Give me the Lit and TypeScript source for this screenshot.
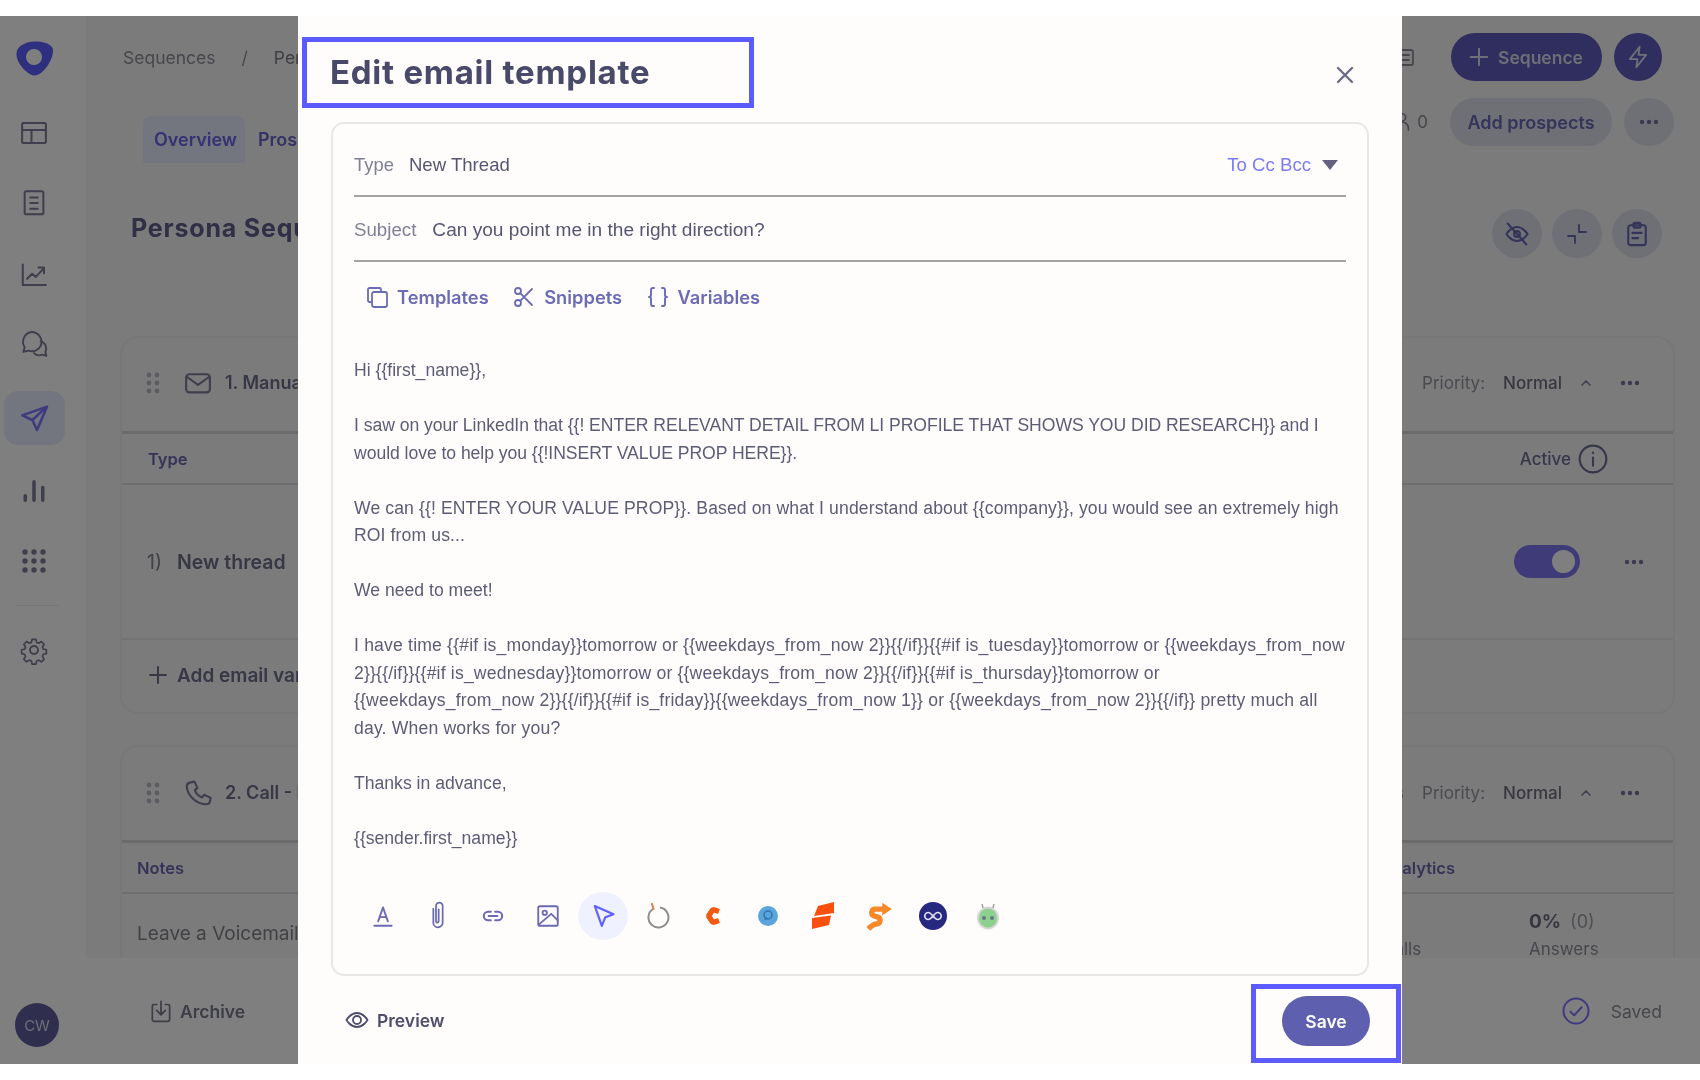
import { LitElement, html, css, svg } from "lit";
import { customElement } from "lit/decorators.js";

const ic = (size: number, body: unknown, sw = 2, cls = "") => html`<svg class=${cls} width=${size} height=${size} viewBox="0 0 24 24" fill="none" stroke="currentColor" stroke-width=${sw} stroke-linecap="round" stroke-linejoin="round">${body}</svg>`;
const dots = html`<svg class="dots" width="20" height="6" viewBox="0 0 20 6" fill="currentColor"><circle cx="3" cy="3" r="2.2"/><circle cx="10" cy="3" r="2.2"/><circle cx="17" cy="3" r="2.2"/></svg>`;
const grip = html`<svg width="14" height="22" viewBox="0 0 14 22" fill="#b9b9c2"><circle cx="3" cy="3" r="2.4"/><circle cx="11" cy="3" r="2.4"/><circle cx="3" cy="11" r="2.4"/><circle cx="11" cy="11" r="2.4"/><circle cx="3" cy="19" r="2.4"/><circle cx="11" cy="19" r="2.4"/></svg>`;
const chev = ic(16, svg`<path d="M6 15l6-6 6 6"/>`, 2.6);

@customElement("app-root")
export class AppRoot extends LitElement {
  static styles = css`
    :host { display: block; height: 1080px; padding: 16px 0; box-sizing: border-box; background: #fff; font-family: Inter, "Liberation Sans", sans-serif; color: #7e7ea0; }
    * { box-sizing: border-box; }
    .stage { position: relative; height: 1048px; overflow: hidden; }
    .app { display: flex; height: 1048px; filter: blur(0.7px); }
    .scrim { position: absolute; inset: 0; background: rgba(0,0,0,.5); }

    .side { width: 86px; flex: none; background: #fff; display: grid; grid-template-columns: 68px; grid-template-rows: 82px 70px 70px 74px 64px 84px 62px 15px 48px 40px 50px 1fr; justify-items: center; align-items: center; color: #7c7c98; }
    .logo { color: #5e5eff; display: flex; margin: 3px 0 0 1px; }
    .active { width: 61px; height: 54px; margin-left: 1px; border-radius: 14px; background: #e6ebfe; color: #7e74ff; display: flex; align-items: center; justify-content: center; }
    .sdiv { width: 43px; height: 1px; background: #ececf0; margin-left: 6px; }
    .avatar { align-self: end; width: 44px; height: 44px; margin: 0 0 17px 6px; border-radius: 50%; background: #5e5c9c; color: #dcdcea; font-size: 15px; display: flex; align-items: center; justify-content: center; }

    .main { flex: 1; min-width: 0; display: flex; flex-direction: column; background: #f7f7f8; }
    .top { height: 80px; flex: none; display: flex; align-items: center; padding: 2px 38px 0 37px; gap: 12px; }
    .crumbs { display: flex; gap: 26px; font-size: 17.5px; color: #8c8c98; flex: 1; }
    .crumbs b { font-weight: 400; color: #7c7c88; }
    .btn { height: 48px; border-radius: 24px; background: #5e5cbc; color: #dcdcee; font-size: 17.5px; font-weight: 600; display: flex; align-items: center; gap: 8px; padding: 0 16px 0 17px; width: 151px; }
    .round { width: 48px; height: 48px; border-radius: 50%; background: #5e5cbc; color: #e0e0f0; display: flex; align-items: center; justify-content: center; }
    .row2 { height: 67px; flex: none; display: flex; align-items: flex-start; padding: 0 26px 0 57px; }
    .tab { height: 47px; margin-top: 20px; padding: 13px 11px 0; font-size: 18px; font-weight: 600; border-radius: 8px 8px 0 0; color: #6a64e6; }
    .tab.on { background: #e6ebfe; width: 102px; }
    .tab.off { padding-left: 13px; color: #6866c8; }
    .spacer { flex: 1; }
    .count { display: flex; align-items: center; font-size: 17px; color: #8c8c98; height: 48px; }
    .count.c-doc { margin-right: 23px; }
    .count.c-pe { margin: 2px 22px 0 0; gap: 4px; }
    .pill { height: 48px; width: 162px; margin-top: 2px; border-radius: 24px; background: #dee1ec; color: #6866b4; font-size: 18px; font-weight: 600; display: flex; align-items: center; justify-content: center; }
    .circ { width: 50px; height: 48px; margin-top: 2px; border-radius: 50%; background: #dee1ec; color: #6866b4; display: flex; align-items: center; justify-content: center; margin-left: 12px; }
    .panel { flex: 1; min-height: 0; overflow: hidden; padding: 0 25px 0 34px; }
    .titlerow { height: 173px; padding: 46px 13px 0 11px; display: flex; align-items: flex-start; }
    h1 { margin: -6px 0 0; font-size: 25px; font-weight: 700; letter-spacing: .8px; color: #5e5e8a; line-height: 50px; flex: 1; }
    .titlerow .circ { margin: 0 0 0 10px; height: 49px; }
    .card { border: 2px solid #eeeef0; border-radius: 18px; margin-bottom: 31px; }
    .card.c1 { height: 378px; }
    .card.c2 { height: 300px; }
    .chead { height: 96px; display: flex; align-items: center; padding: 0 33px 4px 24px; font-size: 18px; font-weight: 600; color: #6e6e8c; border-bottom: 3px solid #d6d6da; }
    .c2 .chead { padding-bottom: 2px; }
    .chead .ci { margin: 0 12px 0 23px; color: #7c7c98; display: flex; }
    .prio { font-size: 17px; font-weight: 400; color: #9494a0; margin-right: 18px; }
    .norm { font-size: 17px; font-weight: 500; color: #6e6e80; margin-right: 16px; }
    .chev { color: #8484a0; margin-right: 26px; display: flex; }
    .dots { color: #7474a0; }
    .th { height: 51px; display: flex; align-items: center; font-size: 16.5px; font-weight: 600; color: #6a68ae; border-bottom: 2px solid #dcdce0; }
    .th.a { padding: 0 64px 0 26px; }
    .th.n { padding: 0 218px 0 15px; }
    .active-h { display: flex; align-items: center; gap: 6px; color: #6e6e96; font-weight: 500; font-size: 17px; }
    .rowa { height: 155px; display: flex; align-items: center; padding: 0 29px 0 25px; border-bottom: 2px solid #e8e8ea; font-size: 19.5px; font-weight: 600; color: #6e6e8c; }
    .rowa i { font-style: normal; font-weight: 400; margin-right: 15px; color: #84848c; }
    .tog { width: 66px; height: 33px; border-radius: 17px; background: #7e76f0; display: flex; align-items: center; justify-content: flex-end; padding-right: 5px; margin-right: 44px; }
    .tog span { width: 23px; height: 23px; border-radius: 50%; background: #fff; }
    .add { display: flex; align-items: center; gap: 7px; padding: 0 0 2px 24px; height: 72px; font-size: 19px; font-weight: 600; color: #6e6e8c; }
    .bodyr { display: flex; padding: 0 76px 0 15px; align-items: flex-start; }
    .voice { font-size: 19px; color: #84848c; margin-top: 28px; flex: 1; }
    .stat { margin-top: 12px; font-size: 17px; color: #8c8c9a; width: 68px; }
    .stat.calls { margin-right: 79px; }
    .stat b { display: block; height: 33px; line-height: 32px; font-size: 19px; color: #6e6e80; white-space: nowrap; }
    .stat b span { font-weight: 400; color: #a0a0a8; margin-left: 9px; font-size: 18px; }
    .foot { height: 106px; flex: none; background: #fff; display: flex; align-items: center; justify-content: space-between; padding: 0 38px 0 62px; font-size: 17.5px; }
    .arch { display: flex; align-items: center; gap: 6px; font-weight: 600; color: #7a7a90; }
    .saved { display: flex; align-items: center; gap: 20px; color: #8c8c98; }
    .saved svg { color: #7e74ff; }

    .modal { position: absolute; left: 298px; top: 0; width: 1104px; height: 1048px; background: #fffdfc; padding-top: 21px; display: flex; flex-direction: column; }
    .mhead { height: 71px; flex: none; margin: 0 0 14px 4px; display: flex; align-items: center; }
    .hbox { border: 5px solid #5b5bff; }
    .mtitle { width: 452px; height: 71px; padding-left: 23px; display: flex; align-items: center; }
    .mtitle span { font-size: 33px; font-weight: 650; letter-spacing: .75px; color: #49496a; filter: blur(.5px); margin-top: -1px; }
    .close { margin-left: auto; margin-right: 43px; margin-top: 4px; color: #6a6a88; display: flex; filter: blur(.3px); }
    .edit { height: 854px; flex: none; margin: 0 33px; border: 2px solid #e9e7e5; border-radius: 13px; padding: 0 21px; filter: blur(.5px); }
    .f { display: flex; align-items: center; font-family: "Liberation Sans", Arial, sans-serif; font-size: 18.6px; border-bottom: 2px solid #a3a3a3; color: #565672; }
    .f .l { color: #7f7f96; font-size: 18.4px; margin-right: 15px; }
    .f1 { height: 73px; padding-top: 11px; }
    .f2 { height: 65px; padding-top: 3px; font-size: 19.1px; }
    .f2 .l { font-size: 18.7px; margin-right: 16px; }
    .cc { margin-left: auto; color: #7b7bf5; margin-right: 11px; }
    .tri { width: 0; height: 0; border-left: 8px solid transparent; border-right: 8px solid transparent; border-top: 10px solid #62627e; margin-right: 8px; }
    .tools { height: 71px; display: flex; align-items: center; padding: 0 0 2px 11px; font-size: 18.3px; font-weight: 600; color: #6a6bb5; }
    .tool { display: flex; align-items: center; gap: 8px; margin-right: 23.5px; }
    .text { margin-top: 24px; height: 494px; font-family: "Liberation Sans", Arial, sans-serif; font-size: 17.6px; line-height: 27.5px; color: #5c5c76; white-space: nowrap; }
    .text p { margin: 0 0 27.5px; }
    .text .s0 { letter-spacing: -.05px; }
    .text .s1 { letter-spacing: .11px; }
    .text .s2 { letter-spacing: .18px; }
    .bar { margin-top: 41px; display: flex; gap: 5px; padding-left: 4px; }
    .bi { width: 50px; height: 48px; display: flex; align-items: center; justify-content: center; color: #6a6ab0; border-radius: 50%; }
    .bi.sel { background: #eff1ff; color: #5f5fff; }
    .mfoot { flex: 1; display: flex; justify-content: space-between; align-items: flex-start; padding: 8px 1px 0 47px; }
    .prev { display: flex; align-items: center; gap: 8px; margin-top: 24px; font-size: 17.5px; font-weight: 600; color: #4e4e6c; filter: blur(.4px); }
    .savebox { width: 150px; height: 79px; display: flex; justify-content: flex-end; align-items: flex-start; padding: 7px 26px 0 0; }
    .save { width: 88px; height: 50px; border-radius: 25px; background: #5e5fae; color: #fff; font-size: 17.5px; font-weight: 600; display: flex; align-items: center; justify-content: center; filter: blur(.3px); }
  `;

  private card1() {
    return html`<div class="card c1">
      <div class="chead">${grip}<span class="ci">${ic(30, svg`<rect x="2.5" y="5" width="19" height="14.5" rx="2.5"/><path d="M3 7l9 6.5L21 7"/>`, 1.7)}</span><span>1. Manual email</span><span class="spacer"></span>
        <span class="prio">Priority:</span><span class="norm">Normal</span><span class="chev">${chev}</span>${dots}</div>
      <div class="th a"><span>Type</span><span class="spacer"></span><span class="active-h">Active ${ic(32, svg`<circle cx="12" cy="12" r="10"/><path d="M12 11v6M12 7.2v.3"/>`, 1.6)}</span></div>
      <div class="rowa"><i>1)</i><span>New thread</span><span class="spacer"></span><span class="tog"><span></span></span>${dots}</div>
      <div class="add">${ic(24, svg`<path d="M12 4v16M4 12h16"/>`, 2)}<span>Add email variant</span></div>
    </div>`;
  }

  private card2() {
    return html`<div class="card c2">
      <div class="chead">${grip}<span class="ci">${ic(30, svg`<path d="M6 3.5l3.2-.6 2.3 5-2 2c1 2.6 3 4.600 5.600 5.600l2-2 5 2.300-.6 3.200c-.3 1.300-1.400 2-2.700 2C10.500 21 3 13.500 3 6.200 3 4.900 4.700 3.800 6 3.500z"/>`, 1.7)}</span><span>2. Call - Leave a voicemail</span><span class="spacer"></span>
        <span class="prio">Steps</span><span class="prio">Priority:</span><span class="norm">Normal</span><span class="chev">${chev}</span>${dots}</div>
      <div class="th n"><span>Notes</span><span class="spacer"></span><span>Analytics</span></div>
      <div class="bodyr"><span class="voice">Leave a Voicemail</span>
        <div class="stat calls"><b>0</b>Calls</div>
        <div class="stat"><b>0%<span>(0)</span></b>Answers</div></div>
    </div>`;
  }

  private background() {
    return html`<div class="app">
      <nav class="side">
        <span class="logo"><svg width="38" height="36" viewBox="0 0 38 36" fill="currentColor"><path fill-rule="evenodd" d="M19 .5C26 .5 34 2 36.500 7 38.500 12 34 24 26 31 22 35 16 36 11 31 5 26 0 19 .5 12 1 5 10 .5 19 .5zM18 8a8 8 0 1 0 .01 0z"/></svg></span>
        ${ic(30, svg`<rect x="2.500" y="4" width="19" height="16" rx="1"/><path d="M2.500 9.500h19M10 9.500V20"/>`, 1.6)}
        ${ic(30, svg`<rect x="4.500" y="2.500" width="15" height="18.500" rx="1.500"/><path d="M9 7.500h6M9 12h6M9 16.500h6"/>`, 1.6)}
        ${ic(30, svg`<path d="M3 3.500V20h18.500M6.500 15l4-4 3 2.500L20 6.500M15.500 6H20v4.500"/>`, 1.6)}
        ${ic(32, svg`<path d="M10 3a7.500 7.500 0 0 1 7 10.500 7.500 7.500 0 0 1-9 3.500l-4 .8 1-3.300A7.500 7.500 0 0 1 10 3z"/><path d="M17 10a5.500 5.500 0 0 1 3.500 8l.8 2.800-3.300-.8a5.500 5.500 0 0 1-6-1.200"/>`, 1.4)}
        <span class="active">${ic(32, svg`<path d="M21 3.500L2.500 10l7.500 3.500 3.500 7.500z M10 13.500L21 3.500"/>`, 1.9)}</span>
        ${ic(28, svg`<path d="M4.500 20v-4M12 20V4M19.500 20V9"/>`, 3)}
        <span></span>
        <svg width="24" height="24" viewBox="0 0 24 24" fill="currentColor">${[3,12,21].map(y=>[3,12,21].map(x=>svg`<circle cx=${x} cy=${y} r="2.700"/>`))}</svg>
        <span class="sdiv"></span>
        ${ic(30, svg`<circle cx="12" cy="12" r="3.200"/><path d="M10.300 2.500h3.400l.6 2.700 1.900.8 2.400-1.500 2.400 2.400-1.500 2.400.8 1.900 2.700.6v3.400l-2.700.6-.8 1.900 1.500 2.400-2.400 2.400-2.400-1.500-1.900.8-.6 2.700h-3.400l-.6-2.700-1.900-.8-2.400 1.500-2.400-2.400 1.500-2.400-.8-1.900-2.700-.6v-3.400l2.700-.6.8-1.900-1.500-2.400 2.400-2.400 2.400 1.500 1.900-.8z" transform="translate(1.200 1.200) scale(.9)"/>`, 1.5)}
        <span class="avatar">CW</span>
      </nav>
      <div class="main">
        <div class="top">
          <div class="crumbs"><span>Sequences</span><span>/</span><b>Persona Sequence</b></div>
          <span class="count c-doc">${ic(24, svg`<rect x="3" y="5" width="18" height="15" rx="2"/><path d="M7 10h10M7 15h10"/>`, 1.8)}</span>
          <span class="btn">${ic(22, svg`<path d="M12 3v18M3 12h18"/>`, 2.2)}Sequence</span>
          <span class="round">${ic(26, svg`<path d="M13.500 2.500L4.500 14h7l-1 7.500 9-11.500h-7z"/>`, 1.7)}</span>
        </div>
        <div class="row2">
          <span class="tab on">Overview</span><span class="tab off">Prospects</span><span class="spacer"></span>
          <span class="count c-pe">${ic(22, svg`<circle cx="12" cy="7" r="4"/><path d="M5 21v-2a6 6 0 0 1 14 0v2"/>`, 1.8)}0</span>
          <span class="pill">Add prospects</span><span class="circ">${dots}</span>
        </div>
        <div class="panel">
          <div class="titlerow"><h1>Persona Sequence</h1>
            <span class="circ">${ic(28, svg`<path d="M3 12s3.500-6 9-6 9 6 9 6-3.500 6-9 6-9-6-9-6z"/><circle cx="12" cy="12" r="2.500"/><path d="M4 3l16 18"/>`, 1.8)}</span>
            <span class="circ">${ic(24, svg`<path d="M14 3v7h7M10 21v-7H3"/>`, 1.8)}</span>
            <span class="circ">${ic(28, svg`<rect x="4.500" y="4.500" width="15" height="17" rx="2"/><rect x="9" y="2.500" width="6" height="4" rx="1"/><path d="M8 11h8M8 15.500h5"/>`, 1.8)}</span>
          </div>
          <div class="cards">${this.card1()}${this.card2()}</div>
        </div>
        <div class="foot">
          <span class="arch">${ic(26, svg`<path d="M8 6H5.500A1.500 1.500 0 0 0 4 7.500V20a1.500 1.500 0 0 0 1.500 1.500h13A1.500 1.500 0 0 0 20 20V7.500A1.500 1.500 0 0 0 18.500 6H16M12 3v12M8 11.500l4 4 4-4"/>`, 1.6)}Archive</span>
          <span class="saved">${ic(30, svg`<circle cx="12" cy="12" r="10"/><path d="M7.500 12.500l3 3 6-6.500"/>`, 1.6)}Saved</span>
        </div>
      </div>
    </div>`;
  }

  private toolbar() {
    return html`<div class="bar">
      <span class="bi">${ic(26, svg`<path d="M7.500 17L12 4l4.500 13M9 13h6M4 21h16"/>`, 1.7)}</span>
      <span class="bi">${ic(32, svg`<path d="M8.500 6.500V17a3.500 3.500 0 0 0 7 0V4.500a2.500 2.500 0 0 0-5 0V16a1 1 0 0 0 2 0V7"/>`, 1.3)}</span>
      <span class="bi">${ic(26, svg`<path d="M10 8H7.500a4 4 0 0 0 0 8H10M14 8h2.500a4 4 0 0 1 0 8H14M8 12h8"/>`, 1.9)}</span>
      <span class="bi">${ic(26, svg`<rect x="3" y="3" width="18" height="18" rx="1.500"/><circle cx="9" cy="9" r="2"/><path d="M3.500 20L15 10l6 6"/>`, 1.7)}</span>
      <span class="bi sel">${ic(28, svg`<path d="M5 3.500l16 7-7 2.500-3 7.500z"/>`, 1.8)}</span>
      <span class="bi"><svg width="26" height="28" viewBox="0 0 26 28" fill="none"><path d="M8 7a10 10 0 1 0 7-1.500" stroke="#8d8d8d" stroke-width="2"/><path d="M7 2l1.500 5" stroke="#d9865a" stroke-width="2.200" stroke-linecap="round"/></svg></span>
      <span class="bi"><svg width="20" height="22" viewBox="0 0 20 22" fill="none"><path d="M16 6.500L10 4.500 5.500 11 10 17.500l6-2" stroke="#f4590f" stroke-width="5.500" stroke-linejoin="bevel"/></svg></span>
      <span class="bi"><svg width="22" height="22" viewBox="0 0 22 22"><circle cx="11" cy="11" r="10" fill="#5aa5dc"/><circle cx="11" cy="10" r="4" fill="none" stroke="#2f73b0" stroke-width="1.500"/><path d="M8 15l1.500-3" stroke="#2f73b0" stroke-width="1.500"/></svg></span>
      <span class="bi"><svg width="24" height="30" viewBox="0 0 24 30" fill="#fb4f0f"><path d="M7 5L23 1v11L3 15z"/><path d="M1 17l19-2.500L18 24 1 28z"/></svg></span>
      <span class="bi"><svg width="30" height="32" viewBox="0 0 28 30" fill="none"><path d="M19 8.500H11.500c-4 0-4.500 5.500-1 6.500l3.500 1c3 1 2.500 6.500-1.500 6.500-2 0-5 2-7.500 4.500" stroke="#f5892a" stroke-width="5"/><path d="M18 2.500l9 6-9 6z" fill="#f5892a"/></svg></span>
      <span class="bi"><svg width="28" height="28" viewBox="0 0 28 28"><circle cx="14" cy="14" r="14" fill="#27287f"/><path d="M14 14c-2-2.500-3-3.500-4.700-3.500a3.500 3.500 0 0 0 0 7c1.700 0 2.700-1 4.700-3.500s3-3.500 4.700-3.500a3.500 3.500 0 0 1 0 7c-1.700 0-2.700-1-4.700-3.500z" fill="none" stroke="#dfe0f2" stroke-width="1.700"/></svg></span>
      <span class="bi"><svg width="24" height="28" viewBox="0 0 24 28"><ellipse cx="12" cy="16" rx="10" ry="10.500" fill="#8ed08e" stroke="#d5d5d5" stroke-width="2"/><path d="M7 6L6 2M17 6l1-4" stroke="#a0a0a0" stroke-width="1.500"/><circle cx="8" cy="16" r="2" fill="#678"/><circle cx="16" cy="16" r="2" fill="#678"/></svg></span>
    </div>`;
  }

  private modal() {
    return html`<section class="modal">
      <div class="mhead">
        <div class="mtitle hbox"><span>Edit email template</span></div>
        <span class="close">${ic(28, svg`<path d="M6 6l12 12M18 6L6 18"/>`, 2)}</span>
      </div>
      <div class="edit">
        <div class="f f1"><span class="l">Type</span><span>New Thread</span><span class="cc">To Cc Bcc</span><span class="tri"></span></div>
        <div class="f f2"><span class="l">Subject</span><span>Can you point me in the right direction?</span></div>
        <div class="tools">
          <span class="tool">${ic(24, svg`<path d="M6 17H4.500A1.500 1.500 0 0 1 3 15.500V4.500A1.500 1.500 0 0 1 4.500 3h10A1.500 1.500 0 0 1 16 4.500V6"/><rect x="7" y="7" width="15" height="15" rx="2"/>`, 1.8)}Templates</span>
          <span class="tool">${ic(24, svg`<circle cx="6" cy="6" r="3"/><circle cx="6" cy="18" r="3"/><path d="M8.200 8.200L20 20M8.200 15.800L20 4"/>`, 1.8)}Snippets</span>
          <span class="tool">${ic(24, svg`<path d="M8 3H7a2 2 0 0 0-2 2v5a2 2 0 0 1-2 2 2 2 0 0 1 2 2v5a2 2 0 0 0 2 2h1M16 3h1a2 2 0 0 1 2 2v5a2 2 0 0 0 2 2 2 2 0 0 0-2 2v5a2 2 0 0 1-2 2h-1"/>`, 1.9)}Variables</span>
        </div>
        <div class="text">
          <p>Hi {{first_name}},</p>
          <p class="s0">I saw on your LinkedIn that {{! ENTER RELEVANT DETAIL FROM LI PROFILE THAT SHOWS YOU DID RESEARCH}} and I<br>would love to help you {{!INSERT VALUE PROP HERE}}.</p>
          <p class="s1">We can {{! ENTER YOUR VALUE PROP}}. Based on what I understand about {{company}}, you would see an extremely high<br>ROI from us...</p>
          <p>We need to meet!</p>
          <p class="s2">I have time {{#if is_monday}}tomorrow or {{weekdays_from_now 2}}{{/if}}{{#if is_tuesday}}tomorrow or {{weekdays_from_now<br>2}}{{/if}}{{#if is_wednesday}}tomorrow or {{weekdays_from_now 2}}{{/if}}{{#if is_thursday}}tomorrow or<br>{{weekdays_from_now 2}}{{/if}}{{#if is_friday}}{{weekdays_from_now 1}} or {{weekdays_from_now 2}}{{/if}} pretty much all<br>day. When works for you?</p>
          <p>Thanks in advance,</p>
          <p>{{sender.first_name}}</p>
        </div>
        ${this.toolbar()}
      </div>
      <div class="mfoot">
        <span class="prev">${ic(24, svg`<path d="M1.500 12S5.500 5 12 5s10.500 7 10.500 7-4 7-10.500 7S1.500 12 1.500 12z"/><circle cx="12" cy="12" r="4"/>`, 1.8)}Preview</span>
        <div class="savebox hbox"><span class="save">Save</span></div>
      </div>
    </section>`;
  }

  render() {
    return html`<div class="stage">${this.background()}<div class="scrim"></div>${this.modal()}</div>`;
  }
}
